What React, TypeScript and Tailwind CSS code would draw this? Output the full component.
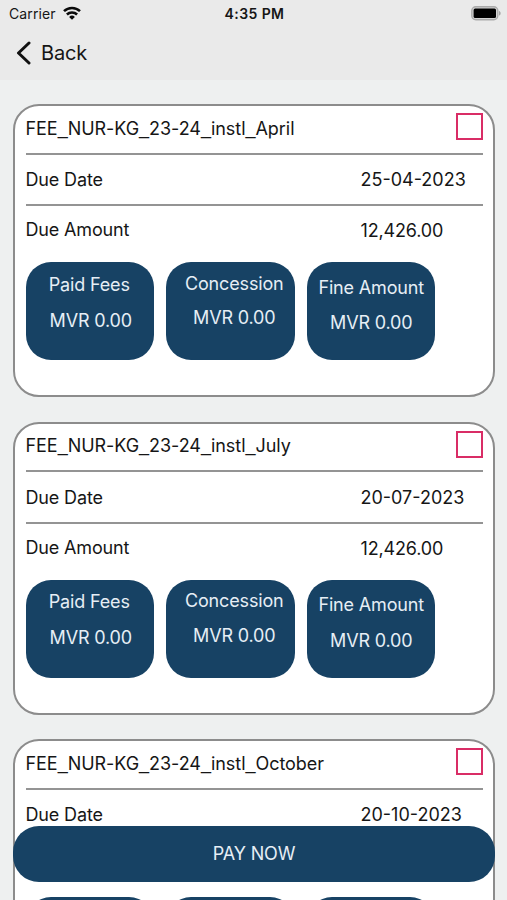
import React, { useState } from 'react';

interface Installment {
  name: string;
  dueDate: string;
  dueAmount: string;
}

const installments: Installment[] = [
  { name: 'FEE_NUR-KG_23-24_instl_April', dueDate: '25-04-2023', dueAmount: '12,426.00' },
  { name: 'FEE_NUR-KG_23-24_instl_July', dueDate: '20-07-2023', dueAmount: '12,426.00' },
  { name: 'FEE_NUR-KG_23-24_instl_October', dueDate: '20-10-2023', dueAmount: '12,426.00' },
];

function StatusBar() {
  return (
    <div className="grid h-[27px] grid-cols-3 items-center pl-[9px] pr-[6px] text-[14px]">
      <div className="flex items-center gap-[7px]">
        <span className="tracking-[0.1px]">Carrier</span>
        <svg className="mb-[2px]" width="18" height="14" viewBox="0 0 18 14" fill="none" stroke="#0a0a0a" strokeWidth="2.5">
          <path d="M1 5.2a11.3 11.3 0 0 1 16 0" />
          <path d="M3.9 8.5a7.2 7.2 0 0 1 10.2 0" />
          <path d="M9 13.8L6.1 10.9a4.1 4.1 0 0 1 5.8 0z" fill="#0a0a0a" stroke="none" />
        </svg>
      </div>
      <span className="pr-px text-center font-semibold tracking-[0.4px]">4:35 PM</span>
      <svg className="mb-px justify-self-end" width="30" height="15" viewBox="0 0 30 15">
        <rect x="0.8" y="0.8" width="26" height="13" rx="4" fill="#d4d4d4" stroke="#aaa" strokeWidth="1.4" />
        <rect x="2.6" y="2.6" width="22.4" height="9.4" rx="1.5" fill="#000" />
        <path d="M28 5c2.2.6 2.2 4 0 4.6z" fill="#a5a5a5" />
      </svg>
    </div>
  );
}

// Underscores use a wider glyph than the rest of the name
function FeeName({ name }: { name: string }) {
  return (
    <span className="mt-[10.5px] tracking-[-0.05px]">
      {name.split('_').map((part, idx) => (
        <React.Fragment key={idx}>
          {idx > 0 && <span className="relative -top-px font-['Liberation_Sans',sans-serif] leading-none tracking-normal">_</span>}
          {part}
        </React.Fragment>
      ))}
    </span>
  );
}

function FeeCard({ item }: { item: Installment }) {
  const [checked, setChecked] = useState(false);

  return (
    <div className="h-[293px] shrink-0 rounded-[26px] border-2 border-[#8c8c8c] bg-white pl-[10.5px] pr-[10.5px] text-[18px] leading-6 tracking-[-0.15px]">
      <div className="flex h-[46.5px] justify-between">
        <FeeName name={item.name} />
        <button
          onClick={() => setChecked(!checked)}
          aria-label={item.name}
          className={`mt-[7px] size-[27px] border-2 border-[#d92d66] ${checked ? 'bg-[#d92d66]' : 'bg-white'}`}
        />
      </div>
      <div className="h-[2px] bg-[#949494]" />
      <div className="flex h-[49.5px] items-center justify-between pt-[2px]">
        <span>Due Date</span>
        <span className="w-[122px] tracking-normal">{item.dueDate}</span>
      </div>
      <div className="h-[2px] bg-[#949494]" />
      <div className="flex h-[56px] justify-between">
        <span className="mt-3">Due Amount</span>
        <span className="mt-[13px] w-[122px]">{item.dueAmount}</span>
      </div>

      {/* Amount tiles */}
      <div className="flex gap-3 text-center text-[#e6eef5]">
        <div className="h-[98px] w-[128.5px] rounded-[25px] bg-[#174264] pt-[10.5px]">
          <p className="pr-[1px]">Paid Fees</p>
          <p className="mt-3 pl-[2px]">MVR 0.00</p>
        </div>
        <div className="h-[98px] w-[128.5px] rounded-[25px] bg-[#174264] pt-[9.5px]">
          <p className="pl-[8px]">Concession</p>
          <p className="mt-[10.5px] pl-[8px]">MVR 0.00</p>
        </div>
        <div className="h-[98px] w-[128.5px] rounded-[25px] bg-[#174264] pt-[13.5px]">
          <p className="pl-[1px]">Fine Amount</p>
          <p className="mt-[11.5px] pl-[1px]">MVR 0.00</p>
        </div>
      </div>
    </div>
  );
}

export default function App() {
  return (
    <div className="relative flex h-[900px] w-[507px] flex-col overflow-hidden bg-[#eef0f0] font-['Inter',sans-serif] text-[#161616]">
      <header className="h-20 shrink-0 bg-[#eaeaea]">
        <StatusBar />
        <button className="flex h-[51px] items-center gap-[10px] pl-[16px] text-[20px] tracking-[-0.2px]">
          <svg width="15" height="24" viewBox="0 0 15 24" fill="none" stroke="#111" strokeWidth="3" strokeLinecap="round" strokeLinejoin="round">
            <path d="M13 2L2.5 12L13 22" />
          </svg>
          Back
        </button>
      </header>

      <main className="flex flex-col gap-[24.6px] pt-6 pl-[13px] pr-[12px]">
        {installments.map((item) => (
          <FeeCard key={item.name} item={item} />
        ))}
      </main>

      <button className="absolute top-[825.5px] left-[13px] h-14 w-[482px] rounded-[26px] bg-[#174264] text-[18px] tracking-[-0.15px] text-[#e6eef5]">
        PAY NOW
      </button>
    </div>
  );
}
